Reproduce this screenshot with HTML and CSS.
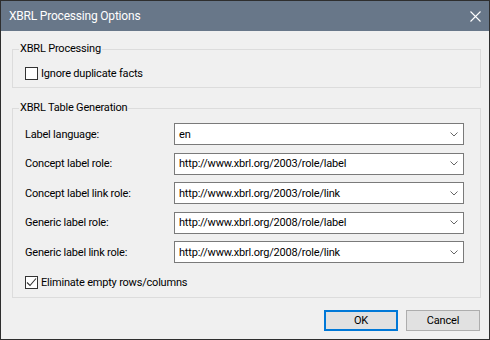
FILE: index.html
```html
<!DOCTYPE html>
<html lang="en">
<head>
    <meta charset="UTF-8">
    <meta name="viewport" content="width=device-width, initial-scale=1.0">
    <title>XBRL Processing Options</title>
    <link rel="stylesheet" href="styles.css">
</head>
<body>
    <div class="dialog">
        <div class="titlebar">
            <span class="title">XBRL Processing Options</span>
            <svg class="close" width="11" height="11" viewBox="0 0 11 11">
                <path d="M0.5 0.5 L10.5 10.5 M10.5 0.5 L0.5 10.5" stroke="#fff" stroke-width="1.1" fill="none"/>
            </svg>
        </div>

        <div class="content">
            <fieldset class="group">
                <legend>XBRL Processing</legend>
                <label class="check">
                    <span class="box"></span>
                    Ignore duplicate facts
                </label>
            </fieldset>

            <fieldset class="group table-gen">
                <legend>XBRL Table Generation</legend>
                <div class="rows">
                    <div class="row">
                        <span class="label">Label language:</span>
                        <div class="combo"><span>en</span><svg class="arrow" width="8" height="5" viewBox="0 0 8 5"><path d="M0.5 0.5 L4 4 L7.5 0.5" stroke="#666" fill="none"/></svg></div>
                    </div>
                    <div class="row">
                        <span class="label">Concept label role:</span>
                        <div class="combo"><span>http://www.xbrl.org/2003/role/label</span><svg class="arrow" width="8" height="5" viewBox="0 0 8 5"><path d="M0.5 0.5 L4 4 L7.5 0.5" stroke="#666" fill="none"/></svg></div>
                    </div>
                    <div class="row">
                        <span class="label">Concept label link role:</span>
                        <div class="combo"><span>http://www.xbrl.org/2003/role/link</span><svg class="arrow" width="8" height="5" viewBox="0 0 8 5"><path d="M0.5 0.5 L4 4 L7.5 0.5" stroke="#666" fill="none"/></svg></div>
                    </div>
                    <div class="row">
                        <span class="label">Generic label role:</span>
                        <div class="combo"><span>http://www.xbrl.org/2008/role/label</span><svg class="arrow" width="8" height="5" viewBox="0 0 8 5"><path d="M0.5 0.5 L4 4 L7.5 0.5" stroke="#666" fill="none"/></svg></div>
                    </div>
                    <div class="row">
                        <span class="label">Generic label link role:</span>
                        <div class="combo"><span>http://www.xbrl.org/2008/role/link</span><svg class="arrow" width="8" height="5" viewBox="0 0 8 5"><path d="M0.5 0.5 L4 4 L7.5 0.5" stroke="#666" fill="none"/></svg></div>
                    </div>
                </div>
                <label class="check eliminate">
                    <span class="box checked">
                        <svg width="11" height="11" viewBox="0 0 11 11"><path d="M1 5.5 L4 8.5 L10 1.5" stroke="#333" stroke-width="1.1" fill="none"/></svg>
                    </span>
                    Eliminate empty rows/columns
                </label>
            </fieldset>

            <div class="buttons">
                <button class="btn default">OK</button>
                <button class="btn">Cancel</button>
            </div>
        </div>
    </div>
</body>
</html>
```

FILE: styles.css
```css
body {
    margin: 0;
    font-family: Roboto, 'Liberation Sans', Arial, sans-serif;
    font-size: 11px;
    letter-spacing: -0.2px;
    color: #000;
}
.dialog {
    width: 490px;
    height: 340px;
    box-sizing: border-box;
    border: 1px solid #2e2e2e;
    background-color: #f0f0f0;
    display: flex;
    flex-direction: column;
}
.titlebar {
    height: 30px;
    background-color: #687789;
    color: #fff;
    display: flex;
    align-items: center;
    justify-content: space-between;
    padding: 0 8px 0 8px;
}
.title {
    font-size: 12px;
    letter-spacing: -0.2px;
}
.content {
    flex: 1;
    padding: 10px 8px 0 11px;
    display: flex;
    flex-direction: column;
}
.group {
    margin: 0;
    border: 1px solid #dcdcdc;
    padding: 8px 12px 6px 12px;
    min-width: 0;
}
.group legend {
    padding: 0 1px;
    margin-left: -6px;
    line-height: 16px;
}
.table-gen {
    margin-top: 12px;
    padding-top: 7px;
    padding-bottom: 7px;
}
.check {
    display: flex;
    align-items: center;
    gap: 3px;
    height: 16px;
}
.box {
    width: 11px;
    height: 11px;
    border: 1px solid #333;
    background-color: #fff;
    display: inline-flex;
}
.rows {
    display: flex;
    flex-direction: column;
    gap: 7.5px;
}
.row {
    display: flex;
    align-items: center;
}
.label {
    width: 149px;
}
.combo {
    width: 290px;
    height: 22px;
    box-sizing: border-box;
    border: 1px solid #7a7a7a;
    background-color: #fff;
    display: flex;
    align-items: center;
    justify-content: space-between;
    padding: 0 5px 0 4px;
}
.eliminate {
    margin-top: 11px;
}
.buttons {
    margin-top: auto;
    margin-bottom: 8px;
    display: flex;
    justify-content: flex-end;
    gap: 8px;
    padding-right: 1px;
}
.btn {
    width: 74px;
    height: 21px;
    box-sizing: border-box;
    font-family: inherit;
    font-size: 11px;
    letter-spacing: -0.2px;
    color: #000;
    background-color: #e1e1e1;
    border: 1px solid #adadad;
    padding: 0;
}
.btn.default {
    border: 2px solid #0078d7;
}
```
